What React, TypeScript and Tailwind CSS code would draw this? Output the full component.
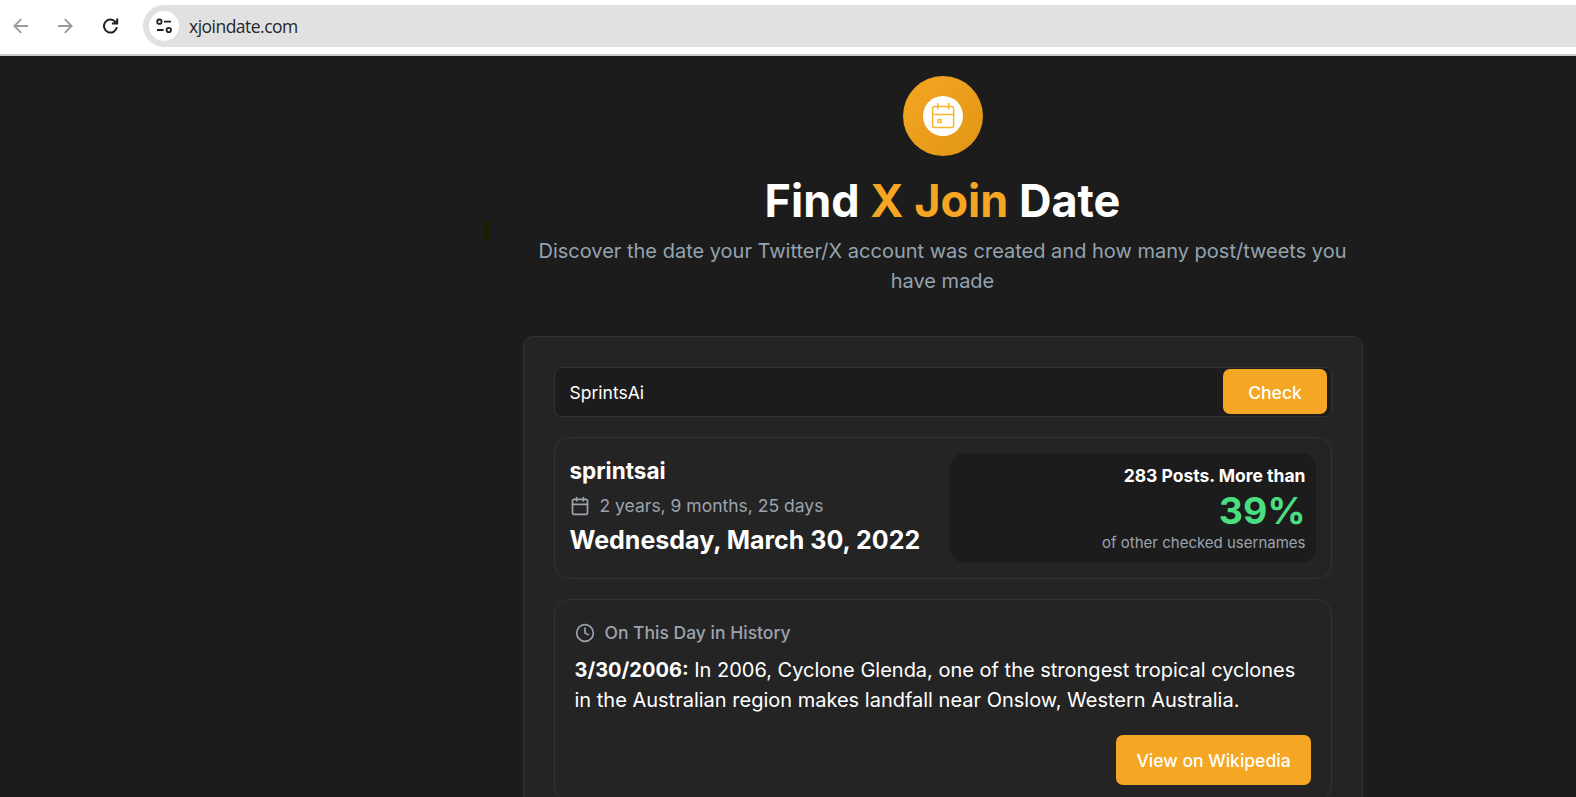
import { Calendar, Clock } from "lucide-react";

function BrowserBar() {
  return (
    <header className="flex h-[56px] shrink-0 items-start border-b-2 border-[#c9c9c9] bg-white pt-[5px]">
      <div className="flex h-[42px] w-[143px] shrink-0 items-center pl-[13px]">
        <svg width="15" height="16" viewBox="0 0 15 16" fill="none" stroke="#9b9b9b" strokeWidth="1.9">
          <path d="M15 8H1.5M8.2 1.2L1.4 8l6.8 6.8" />
        </svg>
        <svg className="ml-[30px]" width="15" height="16" viewBox="0 0 15 16" fill="none" stroke="#9b9b9b" strokeWidth="1.9">
          <path d="M0 8h13.5M6.8 1.2L13.6 8l-6.8 6.8" />
        </svg>
        <svg className="ml-[29px]" width="17" height="16" viewBox="0 0 17 16" fill="none" stroke="#1f1f1f" strokeWidth="2">
          <path d="M14.9 9.2A6.5 6.5 0 1 1 13.4 3.8L15 5.4M15.2 0.5V5.6H9.9" />
        </svg>
      </div>
      <div className="flex h-[42px] flex-1 items-center rounded-l-full bg-[#e1e1e1] pl-[6px]">
        <span className="flex size-[30px] items-center justify-center rounded-full bg-white">
          <svg width="16" height="16" viewBox="0 0 16 16" fill="none" stroke="#1f1f1f" strokeWidth="1.8">
            <circle cx="3.4" cy="3.7" r="2.2" />
            <path d="M8 3.7h7M1 12h6.6" />
            <circle cx="12.8" cy="12" r="2.2" />
          </svg>
        </span>
        <span className="ml-[10px] font-['Open_Sans','Noto_Sans',sans-serif] text-[17.5px] leading-[24px] tracking-[-0.52px] text-[#26272b]">
          xjoindate.com
        </span>
      </div>
    </header>
  );
}

function Hero() {
  return (
    <section className="flex flex-col items-center text-center">
      <div className="flex size-20 items-center justify-center rounded-full bg-linear-to-br from-[#f5a623] to-[#e09612]">
        <div className="flex size-10 items-center justify-center rounded-full bg-white">
          <svg width="24" height="28" viewBox="0 0 24 28" fill="none" stroke="#f7b52a" strokeWidth="1.5">
            <rect x="1.6" y="4.6" width="21" height="21" rx="2" />
            <path d="M1.6 12.5h21M6.8 1v6.5M17.7 1v6.5" />
            <rect x="7" y="17.6" width="2.9" height="2.9" />
          </svg>
        </div>
      </div>
      <h1 className="mt-5 mr-px text-[45px] leading-[50px] font-bold text-white">
        Find <span className="text-[#f5a623]">X Join</span> Date
      </h1>
      <p className="mt-2.5 mr-px text-[20px] leading-[30px] text-[#94a3b0]">
        Discover the date your Twitter/X account was created and how many post/tweets you have made
      </p>
    </section>
  );
}

function Result() {
  return (
    <div className="mt-5 flex h-[142px] rounded-[15px] border border-[#333333] py-[15px] pr-[15px] pl-[14.5px]">
      <div className="w-[380.5px] shrink-0">
        <h2 className="text-[22.5px] leading-[35px] font-bold">sprintsai</h2>
        <div className="flex h-[35px] items-center gap-2.5 text-[#9ca3af]">
          <Calendar size={20} strokeWidth={2} />
          <span className="text-[17.5px] leading-[25px]">2 years, 9 months, 25 days</span>
        </div>
        <p className="text-[25px] leading-[35px] font-bold">Wednesday, March 30, 2022</p>
      </div>
      <div className="flex-1 rounded-[15px] bg-[#1c1c1c] py-2.5 pr-[10.5px] text-right">
        <p className="text-[17.5px] leading-[25px] font-bold">283 Posts. More than</p>
        <p className="text-[37.5px] leading-[45px] font-bold text-[#4ade80]">39%</p>
        <p className="text-[15px] leading-[20px] text-[#9ca3af]">of other checked usernames</p>
      </div>
    </div>
  );
}

function History() {
  return (
    <div className="mt-5 h-[202px] rounded-[15px] border border-[#333333] py-5 pr-5 pl-[19.5px]">
      <div className="flex h-[25px] items-center gap-2.5 text-[#9ca3af]">
        <Clock size={20} strokeWidth={2} />
        <span className="text-[17.5px] leading-[25px] font-medium">On This Day in History</span>
      </div>
      <p className="mt-2.5 text-[20px] leading-[30px]">
        <strong className="font-bold">3/30/2006:</strong> In 2006, Cyclone Glenda, one of the strongest tropical
        cyclones in the Australian region makes landfall near Onslow, Western Australia.
      </p>
      <div className="mt-5 flex justify-end">
        <button className="h-[50px] w-[195px] rounded-[7px] bg-[#f5a623] pt-0.5 text-[17.5px] font-medium">
          View on Wikipedia
        </button>
      </div>
    </div>
  );
}

export default function App() {
  return (
    <div className="flex h-[797px] flex-col overflow-hidden bg-[#1c1c1c] font-['Inter',sans-serif] text-white">
      <BrowserBar />
      <main className="relative flex-1 pt-5">
        <span className="absolute top-[166px] left-[484px] h-[19px] w-[6px] bg-[#1f1d00]" />
        <div className="ml-[523px] w-[840px]">
          <Hero />
          <section className="mt-10 h-[500px] rounded-[10px] border border-[#333333] bg-[#242424] p-[30px]">
            <div className="flex h-[50px] items-start justify-between rounded-[7px] border border-[#333333] bg-[#1c1c1c] pt-px pr-1 pl-[14.5px]">
              <span className="text-[17.5px] leading-[47px]">SprintsAi</span>
              <button className="mt-[0.3px] h-[45px] w-[104px] rounded-[7px] bg-[#f5a623] pt-[3px] text-[17.5px] font-medium">
                Check
              </button>
            </div>
            <Result />
            <History />
          </section>
        </div>
      </main>
    </div>
  );
}
